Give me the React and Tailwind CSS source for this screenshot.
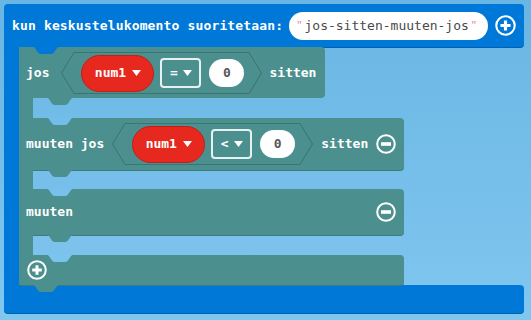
import React from "react";

const TEAL = "#4b8f8e";

const Notch = ({ fill, className }) => (
  <svg width="26" height="7" viewBox="0 0 26 7" className={className}>
    <path d="M0 0 C3 0 4 7 8 7 L18 7 C22 7 23 0 26 0 Z" fill={fill} />
  </svg>
);

const Caret = () => (
  <svg width="9" height="6" viewBox="0 0 9 6">
    <path d="M0 0 H9 L4.5 6 Z" fill="white" />
  </svg>
);

const PlusIcon = ({ size = 20 }) => (
  <svg width={size} height={size} viewBox="0 0 20 20">
    <circle cx="10" cy="10" r="8.8" fill="none" stroke="white" strokeWidth="2" />
    <path d="M10 5.2v9.6M5.2 10h9.6" stroke="white" strokeWidth="3" />
  </svg>
);

const MinusIcon = () => (
  <svg width="20" height="20" viewBox="0 0 20 20">
    <circle cx="10" cy="10" r="8.8" fill="none" stroke="white" strokeWidth="2" />
    <path d="M5 10h10" stroke="white" strokeWidth="3.6" />
  </svg>
);

// boolean compare input: hexagon socket with variable, operator and number
const Compare = ({ op }) => (
  <div className="relative flex h-[42px] w-[201px] items-center pl-[20px]">
    <svg width="201" height="42" viewBox="0 0 201 42" className="absolute left-0 top-0">
      <polygon
        points="0.5,21 13,0.5 188,0.5 200.5,21 188,41.5 13,41.5"
        fill={TEAL}
        stroke="#3a7473"
        strokeWidth="1"
      />
    </svg>
    <div className="relative flex h-[37px] w-[73px] items-center justify-center gap-[6px] rounded-full border border-[#c41f17] bg-[#e6281f] text-[13px] font-bold text-white">
      <span>num1</span>
      <Caret />
    </div>
    <div className="relative ml-[6px] flex h-[30px] w-[41px] items-center justify-center gap-[5px] rounded-[4px] border-2 border-[#e8f1f1] text-[13px] font-bold text-white">
      <span>{op}</span>
      <Caret />
    </div>
    <div className="relative ml-[8px] flex h-[28px] w-[35px] items-center justify-center rounded-full bg-white text-[13px] text-[#575757]">
      0
    </div>
  </div>
);

// empty statement slot of the C-block
const Mouth = ({ h, bump }) => (
  <div className={`relative flex ${h}`}>
    <div className="w-[14px] bg-[#4b8f8e]" />
    <Notch fill={TEAL} className="absolute left-[28px] top-0" />
    <Notch fill={bump} className="absolute left-[28px] top-full z-10" />
  </div>
);

export default function App() {
  return (
    <div className="h-[320px] w-[531px] bg-gradient-to-b from-[#69b5e3] to-[#80c7f0] p-[4px] font-['DejaVu_Sans_Mono',monospace]">
      <div className="flex w-[520px] flex-col">
        {/* event header */}
        <div className="flex h-[43px] items-center whitespace-nowrap rounded-[4px] rounded-bl-none bg-[#0078d7] pl-[8px] pr-[8px] shadow-[0_1px_0_#005fae]">
          <span className="shrink-0 text-[13px] font-bold tracking-[0.15px] text-white">kun keskustelukomento suoritetaan:</span>
          <div className="ml-[6px] flex h-[28px] w-[199px] shrink-0 items-center gap-[3px] rounded-full bg-white pl-[8px] pr-[6px]">
            <span className="font-['Liberation_Sans',sans-serif] text-[12px] text-[#e88a8a]">"</span>
            <span className="text-[13px] text-[#4a4a4a]">jos-sitten-muuten-jos</span>
            <span className="font-['Liberation_Sans',sans-serif] text-[12px] text-[#e88a8a]">"</span>
          </div>
          <div className="ml-auto flex">
            <PlusIcon size={21} />
          </div>
        </div>

        <div className="flex h-[238px]">
          <div className="w-[15px] bg-[#0078d7]" />
          <div className="flex flex-col whitespace-nowrap text-[13px] font-bold text-white">
            {/* jos row */}
            <div className="relative flex h-[51px] w-[306px] items-center rounded-tr-[4px] rounded-br-[4px] bg-[#4b8f8e] pl-[7px] pt-[1px]">
              <Notch fill="#0078d7" className="absolute left-[14px] top-0" />
              <span>jos</span>
              <div className="ml-[12px]">
                <Compare op="=" />
              </div>
              <span className="ml-[7px]">sitten</span>
            </div>
            <Mouth h="h-[20px]" bump="#72bde9" />
            {/* muuten jos row */}
            <div className="flex h-[52px] w-[385px] items-center rounded-r-[4px] bg-[#4b8f8e] pl-[7px] pr-[8px] shadow-[0_1px_0_#3f7b7a]">
              <span>muuten jos</span>
              <div className="ml-[8px]">
                <Compare op="<" />
              </div>
              <span className="ml-[8px]">sitten</span>
              <div className="ml-auto flex">
                <MinusIcon />
              </div>
            </div>
            <Mouth h="h-[19px]" bump="#77c1ec" />
            {/* muuten row */}
            <div className="flex h-[46px] w-[385px] items-center rounded-r-[4px] bg-[#4b8f8e] pl-[7px] pr-[8px] shadow-[0_1px_0_#3f7b7a]">
              <span>muuten</span>
              <div className="ml-auto flex">
                <MinusIcon />
              </div>
            </div>
            <Mouth h="h-[20px]" bump="#7bc4ee" />
            {/* bottom arm */}
            <div className="relative flex h-[30px] w-[385px] items-center rounded-r-[4px] rounded-bl-[3px] bg-[#4b8f8e] pl-[8px] shadow-[0_1px_0_#3f7b7a]">
              <PlusIcon />
              <Notch fill={TEAL} className="absolute left-[14px] top-full z-10" />
            </div>
          </div>
        </div>

        {/* event footer */}
        <div className="h-[28px] rounded-[4px] rounded-tl-none bg-[#0078d7] shadow-[0_1px_0_#005fae]" />
      </div>
    </div>
  );
}
